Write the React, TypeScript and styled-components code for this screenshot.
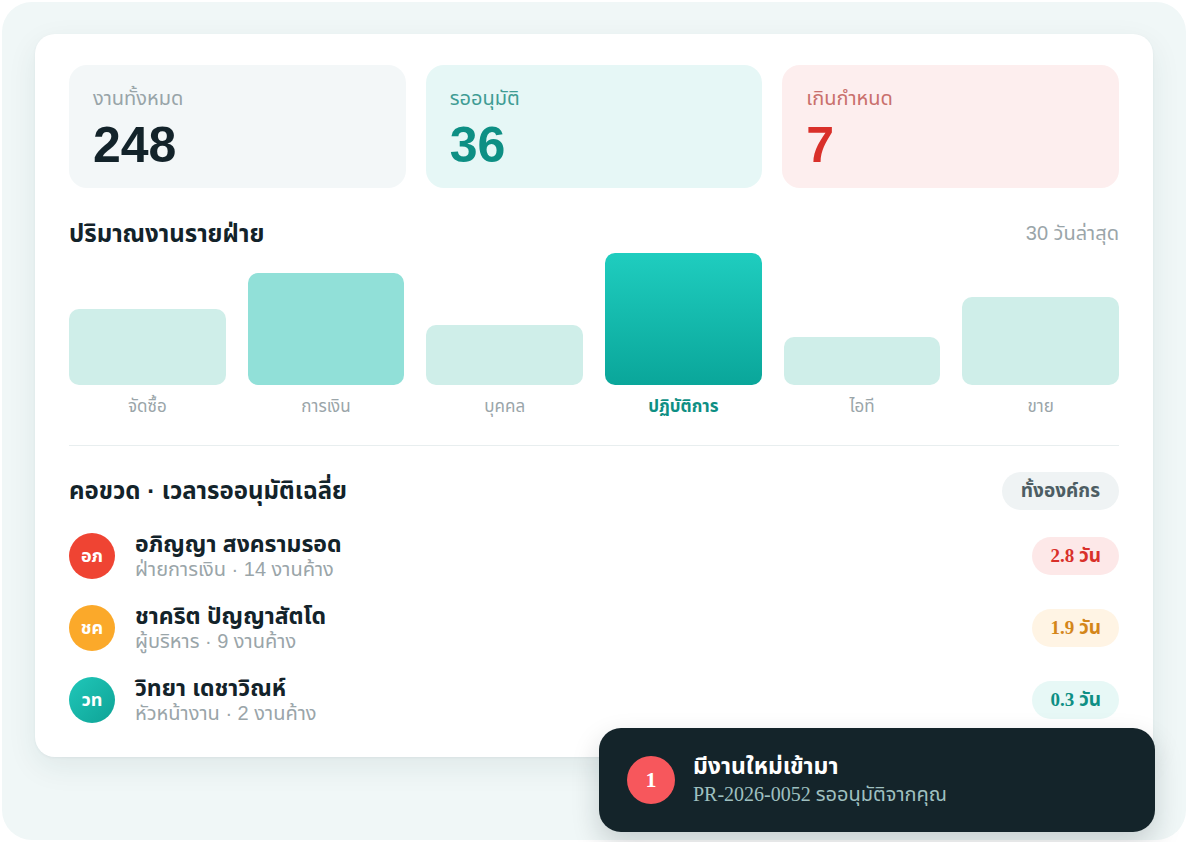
import React from "react"
import styled, { createGlobalStyle } from "styled-components"

const GlobalStyle = createGlobalStyle`
  html, body {
    margin: 0;
    padding: 0;
    background: #ffffff;
    font-family: "Liberation Sans", "Noto Sans Thai", Arial, sans-serif;
    color: #13232a;
  }
  * { box-sizing: border-box; }
`

const serifStack = `"Liberation Serif", "Noto Sans Thai", serif`

type Tone = "neutral" | "teal" | "red"

const stats: { label: string; value: string; tone: Tone }[] = [
  { label: "งานทั้งหมด", value: "248", tone: "neutral" },
  { label: "รออนุมัติ", value: "36", tone: "teal" },
  { label: "เกินกำหนด", value: "7", tone: "red" },
]

const bars = [
  { label: "จัดซื้อ", height: 76, level: 0 },
  { label: "การเงิน", height: 112, level: 1 },
  { label: "บุคคล", height: 60, level: 0 },
  { label: "ปฏิบัติการ", height: 132, level: 2 },
  { label: "ไอที", height: 48, level: 0 },
  { label: "ขาย", height: 88, level: 0 },
]

type Level = "red" | "orange" | "teal"

const people: { initials: string; name: string; meta: string; days: string; level: Level }[] = [
  { initials: "อภ", name: "อภิญญา สงครามรอด", meta: "ฝ่ายการเงิน · 14 งานค้าง", days: "2.8 วัน", level: "red" },
  { initials: "ชค", name: "ชาคริต ปัญญาสัตโด", meta: "ผู้บริหาร · 9 งานค้าง", days: "1.9 วัน", level: "orange" },
  { initials: "วท", name: "วิทยา เดชาวิณห์", meta: "หัวหน้างาน · 2 งานค้าง", days: "0.3 วัน", level: "teal" },
]

const statBg: Record<Tone, string> = { neutral: "#f3f7f8", teal: "#e6f7f6", red: "#fdeeee" }
const statLabel: Record<Tone, string> = { neutral: "#98a4a8", teal: "#3f9c94", red: "#c9706c" }
const statValue: Record<Tone, string> = { neutral: "#13232a", teal: "#0e8f84", red: "#d9302a" }

const barFill = [
  "#cfeee9",
  "#91e0d8",
  "linear-gradient(180deg, #1fcdbf 0%, #0aa69a 100%)",
]

const avatarBg: Record<Level, string> = {
  red: "#ef4433",
  orange: "#fba92a",
  teal: "linear-gradient(135deg, #20c7b9 0%, #0ea396 100%)",
}
const pillBg: Record<Level, string> = { red: "#fde8e8", orange: "#fff4e4", teal: "#e7f8f6" }
const pillText: Record<Level, string> = { red: "#d9302a", orange: "#d4861a", teal: "#0e8f84" }

const App: React.FC = () => {
  return (
    <>
      <GlobalStyle />
      <Frame>
        <Card>
          <StatGrid>
            {stats.map(s => (
              <StatBox key={s.label} tone={s.tone}>
                <StatLabel tone={s.tone}>{s.label}</StatLabel>
                <StatValue tone={s.tone}>{s.value}</StatValue>
              </StatBox>
            ))}
          </StatGrid>

          <SectionHead>
            <SectionTitle>ปริมาณงานรายฝ่าย</SectionTitle>
            <SectionNote>30 วันล่าสุด</SectionNote>
          </SectionHead>

          <Chart>
            {bars.map(b => (
              <BarCol key={b.label}>
                <BarTrack>
                  <Bar level={b.level} style={{ height: b.height }} />
                </BarTrack>
                <BarLabel active={b.level === 2}>{b.label}</BarLabel>
              </BarCol>
            ))}
          </Chart>

          <Divider />

          <ListHead>
            <SectionTitle>คอขวด · เวลารออนุมัติเฉลี่ย</SectionTitle>
            <ScopeButton>ทั้งองค์กร</ScopeButton>
          </ListHead>

          <PeopleList>
            {people.map(p => (
              <PersonRow key={p.name}>
                <Avatar level={p.level}>{p.initials}</Avatar>
                <PersonText>
                  <PersonName>{p.name}</PersonName>
                  <PersonMeta>{p.meta}</PersonMeta>
                </PersonText>
                <DaysPill level={p.level}>{p.days}</DaysPill>
              </PersonRow>
            ))}
          </PeopleList>
        </Card>

        <Toast>
          <ToastCount>1</ToastCount>
          <ToastText>
            <ToastTitle>มีงานใหม่เข้ามา</ToastTitle>
            <ToastSub>PR-2026-0052 รออนุมัติจากคุณ</ToastSub>
          </ToastText>
        </Toast>
      </Frame>
    </>
  )
}

const Frame = styled.div`
  position: relative;
  margin: 2px;
  width: 1184px;
  height: 838px;
  padding: 32px 33px;
  background: #f0f7f7;
  border-radius: 30px;
`

const Card = styled.section`
  background: #ffffff;
  border-radius: 20px;
  padding: 31px 34px 32px;
  box-shadow: 0 10px 30px rgba(20, 60, 70, 0.08), 0 1px 3px rgba(20, 60, 70, 0.05);
`

const StatGrid = styled.div`
  display: grid;
  grid-template-columns: repeat(3, 1fr);
  gap: 20px;
`

const StatBox = styled.div<{ tone: Tone }>`
  height: 123px;
  border-radius: 18px;
  padding: 19px 24px;
  background: ${p => statBg[p.tone]};
`

const StatLabel = styled.div<{ tone: Tone }>`
  font-size: 20px;
  line-height: 28px;
  color: ${p => statLabel[p.tone]};
`

const StatValue = styled.div<{ tone: Tone }>`
  margin-top: 5px;
  font-size: 50px;
  line-height: 56px;
  font-weight: 700;
  color: ${p => statValue[p.tone]};
`

const SectionHead = styled.div`
  display: flex;
  justify-content: space-between;
  align-items: center;
  height: 32px;
  margin-top: 30px;
`

const SectionTitle = styled.h3`
  margin: 0;
  font-size: 24px;
  line-height: 32px;
  font-weight: 700;
  color: #13232a;
`

const SectionNote = styled.span`
  font-size: 20px;
  color: #9aa5a9;
`

const Chart = styled.div`
  display: grid;
  grid-template-columns: repeat(6, 1fr);
  column-gap: 22px;
  margin-top: 3px;
`

const BarCol = styled.div`
  display: flex;
  flex-direction: column;
  align-items: stretch;
`

const BarTrack = styled.div`
  height: 132px;
  display: flex;
  align-items: flex-end;
`

const Bar = styled.div<{ level: number }>`
  width: 100%;
  border-radius: 10px;
  background: ${p => barFill[p.level]};
`

const BarLabel = styled.div<{ active?: boolean }>`
  margin-top: 9px;
  text-align: center;
  font-size: 17px;
  line-height: 26px;
  font-weight: ${p => (p.active ? 700 : 400)};
  color: ${p => (p.active ? "#0e8f84" : "#9aa5a9")};
`

const Divider = styled.hr`
  border: 0;
  height: 1px;
  background: #e8eeef;
  margin: 25px 0 26px;
`

const ListHead = styled.div`
  display: flex;
  justify-content: space-between;
  align-items: center;
`

const ScopeButton = styled.button`
  border: 0;
  height: 38px;
  padding: 0 19px;
  border-radius: 19px;
  background: #eff3f4;
  color: #4d5d63;
  font-family: inherit;
  font-size: 19px;
  font-weight: 700;
`

const PeopleList = styled.div`
  display: flex;
  flex-direction: column;
  gap: 22px;
  margin-top: 21px;
`

const PersonRow = styled.div`
  display: flex;
  align-items: center;
  gap: 20px;
`

const Avatar = styled.div<{ level: Level }>`
  width: 46px;
  height: 46px;
  flex: none;
  border-radius: 50%;
  display: flex;
  align-items: center;
  justify-content: center;
  background: ${p => avatarBg[p.level]};
  color: #ffffff;
  font-size: 18px;
  font-weight: 700;
`

const PersonText = styled.div`
  flex: 1;
  display: flex;
  flex-direction: column;
`

const PersonName = styled.div`
  font-size: 23px;
  line-height: 26px;
  font-weight: 700;
  color: #13232a;
`

const PersonMeta = styled.div`
  font-size: 20px;
  line-height: 24px;
  color: #9aa5a9;
`

const DaysPill = styled.span<{ level: Level }>`
  height: 38px;
  padding: 0 18px;
  border-radius: 19px;
  display: inline-flex;
  align-items: center;
  background: ${p => pillBg[p.level]};
  color: ${p => pillText[p.level]};
  font-family: ${serifStack};
  font-size: 19px;
  font-weight: 700;
`

const Toast = styled.div`
  position: absolute;
  right: 31px;
  bottom: 8px;
  width: 556px;
  height: 104px;
  padding: 0 28px;
  display: flex;
  align-items: center;
  gap: 18px;
  background: #14242a;
  border-radius: 22px;
  box-shadow: 0 12px 28px rgba(10, 30, 35, 0.18);
`

const ToastCount = styled.div`
  width: 48px;
  height: 48px;
  flex: none;
  border-radius: 50%;
  display: flex;
  align-items: center;
  justify-content: center;
  background: #f7575c;
  color: #ffffff;
  font-family: ${serifStack};
  font-size: 22px;
  font-weight: 700;
`

const ToastText = styled.div`
  display: flex;
  flex-direction: column;
  margin-top: -3px;
`

const ToastTitle = styled.div`
  font-size: 23px;
  line-height: 30px;
  font-weight: 700;
  color: #ffffff;
`

const ToastSub = styled.div`
  font-family: ${serifStack};
  font-size: 20px;
  line-height: 26px;
  color: #9fc0c0;
`

export default App
